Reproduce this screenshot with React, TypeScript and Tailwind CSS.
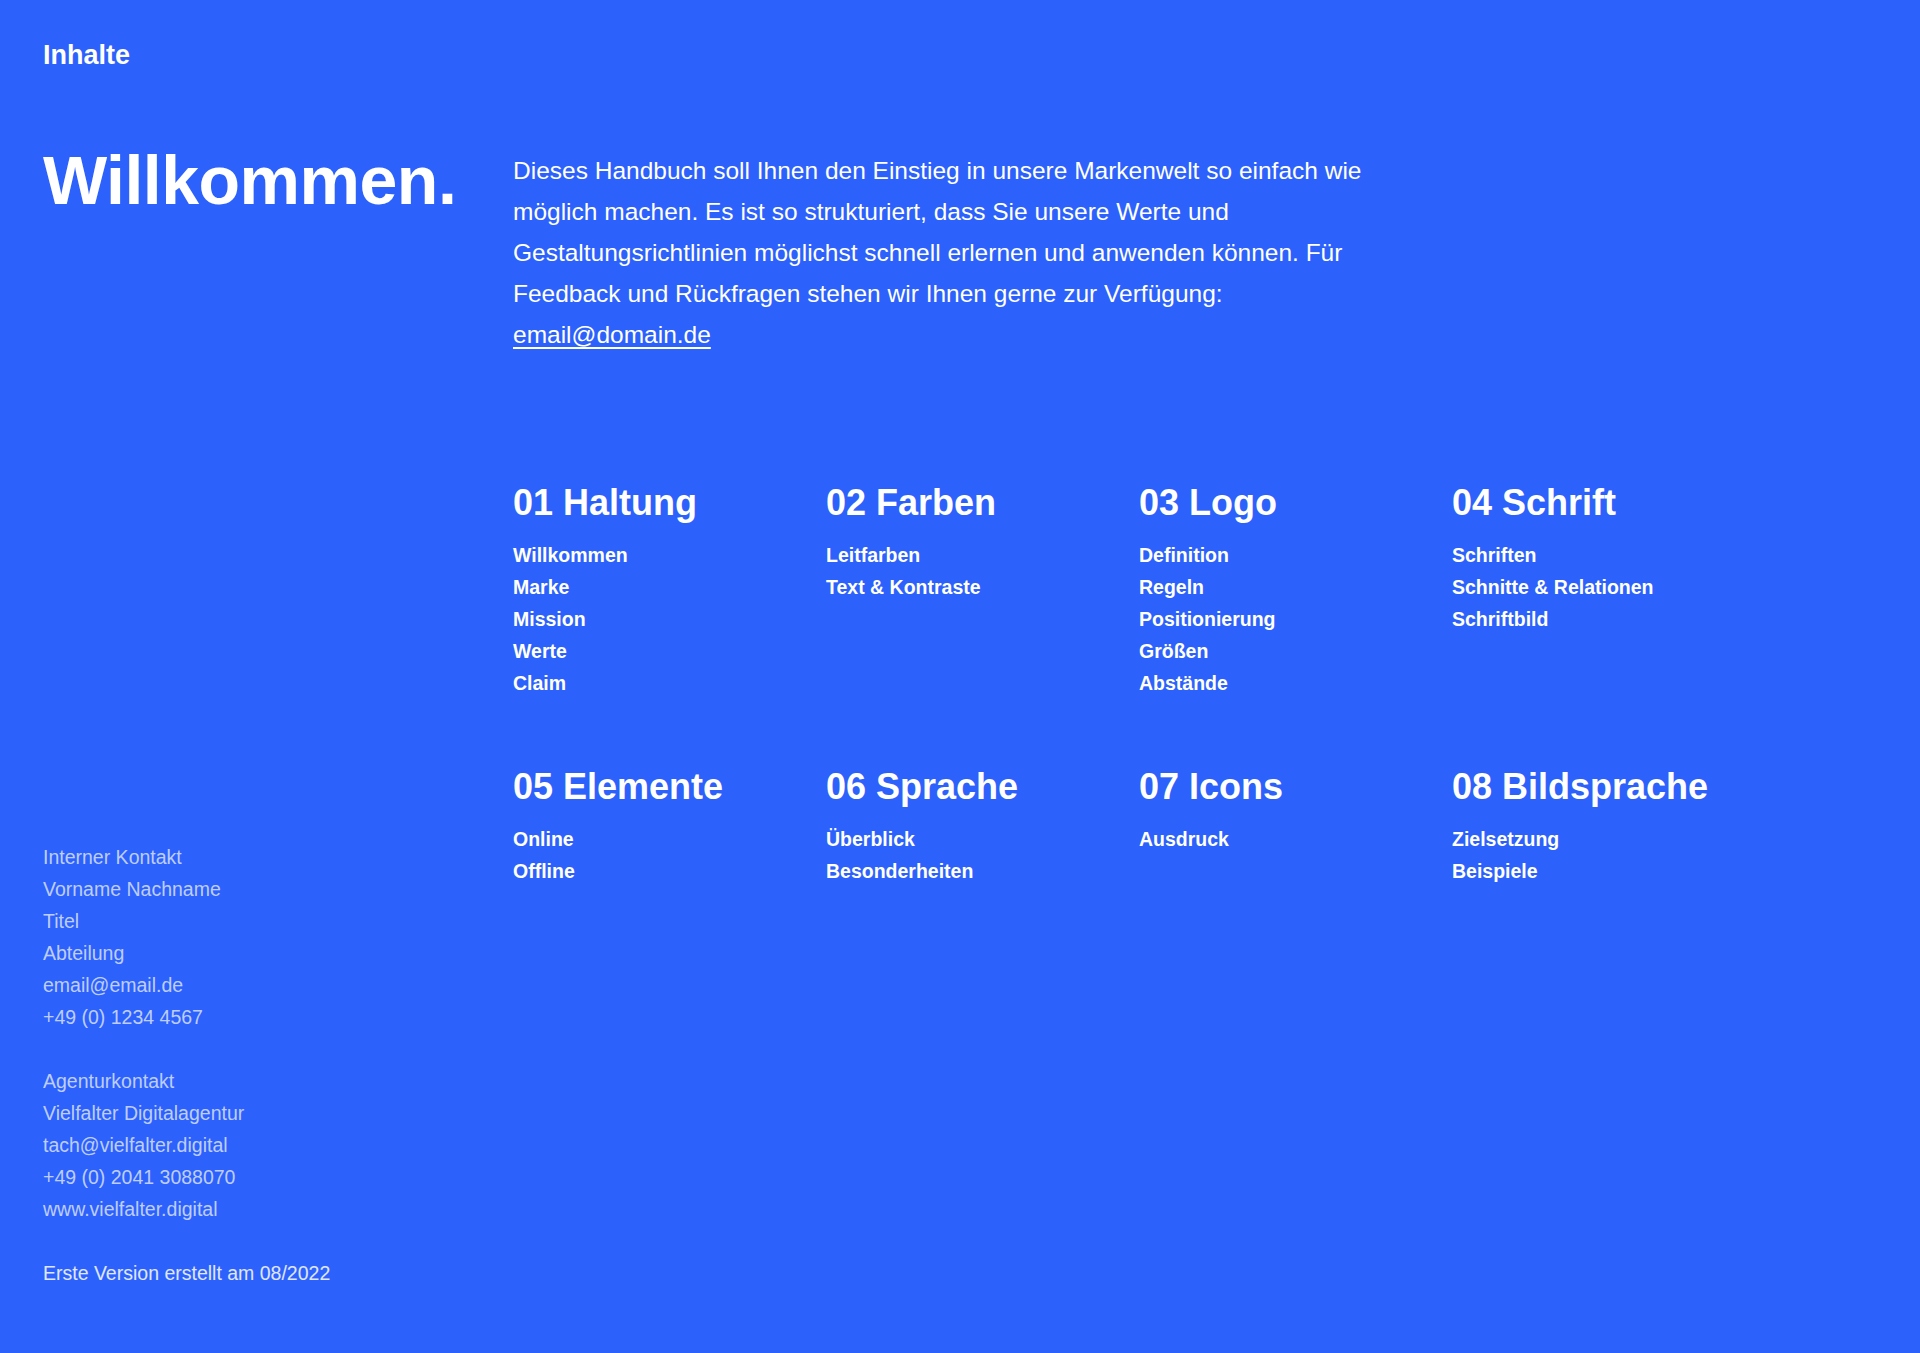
import React from "react";

const groups = [
  { t: "01 Haltung", items: ["Willkommen", "Marke", "Mission", "Werte", "Claim"] },
  { t: "02 Farben", items: ["Leitfarben", "Text & Kontraste"] },
  { t: "03 Logo", items: ["Definition", "Regeln", "Positionierung", "Größen", "Abstände"] },
  { t: "04 Schrift", items: ["Schriften", "Schnitte & Relationen", "Schriftbild"] },
  { t: "05 Elemente", items: ["Online", "Offline"] },
  { t: "06 Sprache", items: ["Überblick", "Besonderheiten"] },
  { t: "07 Icons", items: ["Ausdruck"] },
  { t: "08 Bildsprache", items: ["Zielsetzung", "Beispiele"] },
];

export default function App() {
  return (
    <div
      className="min-h-[1353px] w-full bg-[#2c61fb] text-white flex flex-col px-[43px] pt-[39px] pb-[64px]"
      style={{ fontFamily: '"Liberation Sans", Arial, sans-serif' }}
    >
      <div className="text-[27px] leading-[32px] font-bold">Inhalte</div>
      <div className="flex flex-1 mt-[79px]">
        <div className="w-[470px] shrink-0 flex flex-col">
          <h1 className="text-[68px] leading-[68px] font-bold tracking-[-0.5px] mt-[-4px]">Willkommen.</h1>
          <div className="mt-auto text-[19.5px] leading-[32px] text-white/70">
            <div>Interner Kontakt</div>
            <div>Vorname Nachname</div>
            <div>Titel</div>
            <div>Abteilung</div>
            <div>email@email.de</div>
            <div>+49 (0) 1234 4567</div>
            <div className="h-[32px]" />
            <div>Agenturkontakt</div>
            <div>Vielfalter Digitalagentur</div>
            <div>tach@vielfalter.digital</div>
            <div>+49 (0) 2041 3088070</div>
            <div>www.vielfalter.digital</div>
            <div className="h-[32px]" />
            <div className="text-white/85">Erste Version erstellt am 08/2022</div>
          </div>
        </div>
        <div className="flex-1">
          <p className="w-[910px] text-[24.5px] leading-[41px]">
            Dieses Handbuch soll Ihnen den Einstieg in unsere Markenwelt so einfach wie möglich machen. Es ist so
            strukturiert, dass Sie unsere Werte und Gestaltungsrichtlinien möglichst schnell erlernen und anwenden
            können. Für Feedback und Rückfragen stehen wir Ihnen gerne zur Verfügung:{" "}
            <a className="underline underline-offset-4">email@domain.de</a>
          </p>
          <div className="grid grid-cols-[313px_313px_313px_313px] gap-y-[66px] mt-[126px]">
            {groups.map((g) => (
              <div key={g.t} className={g.t.startsWith("0") && parseInt(g.t) <= 4 ? "h-[218px]" : ""}>
                <h2 className="text-[36px] leading-[44px] font-bold">{g.t}</h2>
                <ul className="mt-[14px] text-[19.5px] leading-[32px] font-bold">
                  {g.items.map((i) => (
                    <li key={i}>{i}</li>
                  ))}
                </ul>
              </div>
            ))}
          </div>
        </div>
      </div>
    </div>
  );
}
